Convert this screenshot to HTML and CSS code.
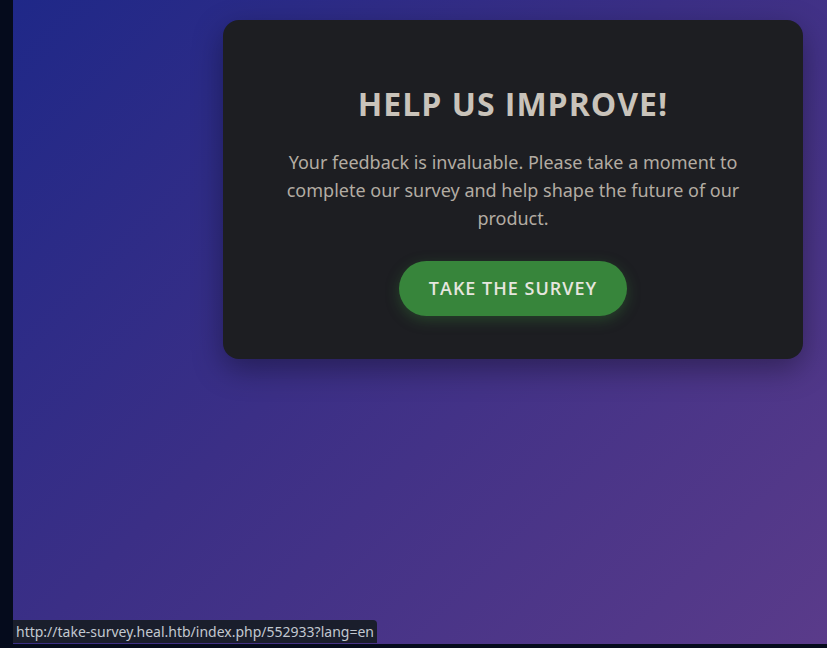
FILE: index.html
```html
<!DOCTYPE html>
<html lang="en">
<head>
<meta charset="utf-8">
<title>Survey</title>
<link rel="stylesheet" href="styles.css">
</head>
<body>
<div class="frame">
  <div class="side"></div>
  <main class="stage">
    <section class="card">
      <h1 class="title">HELP US IMPROVE!</h1>
      <p class="text">Your feedback is invaluable. Please take a moment to complete our survey and help shape the future of our product.</p>
      <a class="btn" href="#">TAKE THE SURVEY</a>
    </section>
    <div class="status">http://take-survey.heal.htb/index.php/552933?lang=en</div>
  </main>
</div>
<div class="bottom"></div>
</body>
</html>
```

FILE: styles.css
```css
html, body {
  margin: 0;
  padding: 0;
  height: 100%;
  overflow: hidden;
  background: #050b1c;
  font-family: "Open Sans", "Noto Sans", sans-serif;
}
.frame {
  display: flex;
  height: 644px;
}
.side {
  width: 13px;
  flex: none;
  background: #050b1c;
}
.stage {
  position: relative;
  flex: 1;
  display: flex;
  justify-content: flex-end;
  align-items: flex-start;
  padding: 20px 24px 0 0;
  background: linear-gradient(135deg, #1f2888 0%, #3b2f86 45%, #5a3b8a 100%);
}
.card {
  width: 580px;
  box-sizing: border-box;
  padding: 60px 60px 43px;
  background: #1d1e22;
  border-radius: 16px;
  box-shadow: 0 10px 30px rgba(0, 0, 0, 0.35);
  text-align: center;
  display: flex;
  flex-direction: column;
  align-items: center;
}
.title {
  margin: 0;
  font-size: 32px;
  line-height: 48px;
  font-weight: 700;
  letter-spacing: 1px;
  color: #c9c3ba;
}
.text {
  margin: 20px 0 29px;
  font-family: "Noto Sans", "Open Sans", sans-serif;
  font-size: 18px;
  line-height: 28px;
  color: #b3aca2;
}
.btn {
  display: block;
  padding: 0 30px;
  height: 55px;
  line-height: 55px;
  border-radius: 28px;
  background: #37853b;
  color: #e6e6df;
  font-size: 18px;
  font-weight: 600;
  letter-spacing: 1px;
  text-decoration: none;
  box-shadow: 0 4px 14px rgba(56, 138, 60, 0.35);
}
.status {
  position: absolute;
  left: 0;
  bottom: 1px;
  height: 23px;
  line-height: 23px;
  padding: 0 3px;
  background: #1a1e2c;
  color: #c2c8d0;
  font-size: 14px;
  border-radius: 0 4px 0 0;
  font-family: "Noto Sans", "Open Sans", sans-serif;
}
.bottom {
  height: 4px;
  background: #050b1c;
}
```
